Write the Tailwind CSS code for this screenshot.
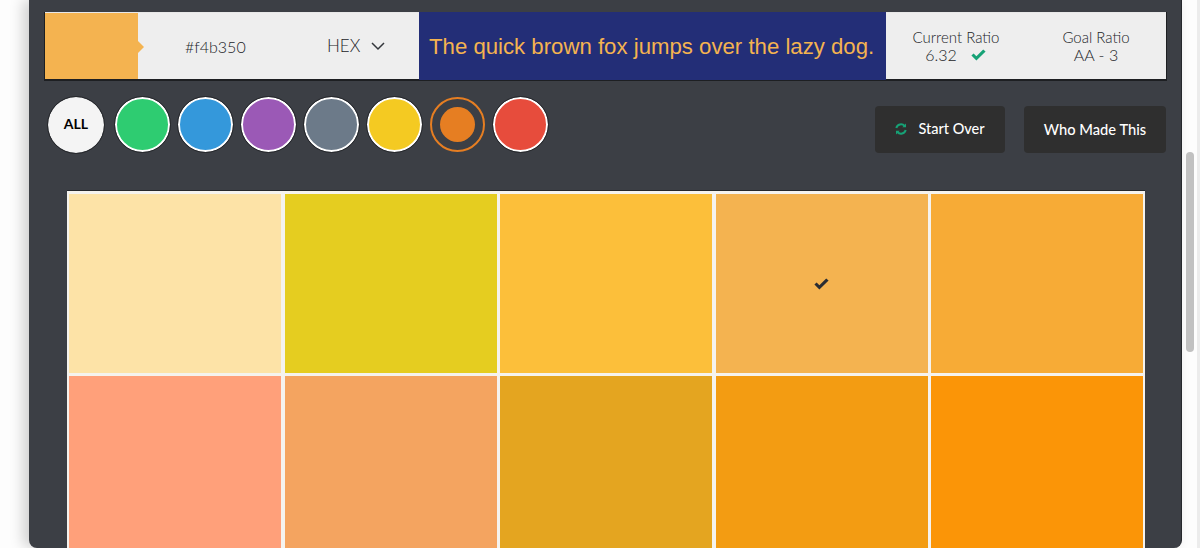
<!doctype html>
<html>
<head>
<meta charset="utf-8">
<script src="https://cdn.jsdelivr.net/npm/@tailwindcss/browser@4"></script>
</head>
<body class="bg-[#fdfdfd] overflow-hidden font-['Lato','sans-serif']">
<div class="w-[1200px] h-[548px] flex overflow-hidden">
  <main class="ml-[29px] w-[1153px] h-[548px] shrink-0 bg-[#3c3f45] rounded-b-lg shadow-[-6px_0_14px_rgba(0,0,0,0.18)] border-r border-[#26282c] pt-3 pl-4 pr-[15px] overflow-hidden">
    <section class="flex h-[69px] border-t border-[#e8e8e8] border-b-2 border-b-[#1d1f22] bg-[#eeeeee] shadow-[1px_0_0_#1d1f22,-1px_0_0_#1d1f22]">
      <div class="relative w-[93px] bg-[#f4b350] shrink-0">
        <div class="absolute left-full top-[28px] w-0 h-0 border-y-[6px] border-y-transparent border-l-[6px] border-l-[#f4b350]"></div>
      </div>
      <div class="flex items-center w-[281px] shrink-0 text-[#222428]">
        <span class="ml-[47px] w-[142px] text-[16px] font-light pt-[2px]">#f4b350</span>
        <span class="text-[17px] font-light">HEX</span>
        <svg class="ml-[11px] mt-[1px]" width="14" height="9" viewBox="0 0 14 9" fill="none" stroke="#33363b" stroke-width="1.5"><path d="M1 1l6 6 6-6"/></svg>
      </div>
      <div class="w-[467px] shrink-0 -mt-px -mb-px bg-[#232e77] flex items-center pl-[10px] pt-[1px] text-[#f4b350] text-[22.2px] font-['Liberation_Sans','sans-serif'] whitespace-nowrap">The quick brown fox jumps over the lazy dog.</div>
      <div class="flex-1 flex text-[#222428] font-light text-center">
        <div class="w-[140px] pt-[15px] leading-[18px]">
          <div class="text-[15px]">Current Ratio</div>
          <div class="text-[16px] flex items-center justify-center gap-[14px] pr-[1px]">6.32
            <svg width="15" height="12" viewBox="0 0 15 12" fill="#16a276"><path d="M5.4 11.6 0.4 6.6 2.6 4.4 5.4 7.2 12.2 0.4 14.6 2.6z"/></svg>
          </div>
        </div>
        <div class="w-[140px] pt-[15px] leading-[18px]">
          <div class="text-[15px]">Goal Ratio</div>
          <div class="text-[16px]">AA - 3</div>
        </div>
      </div>
    </section>
    <section class="flex justify-between mt-[14px]">
      <div class="flex gap-[8px] pl-[3px] pt-[1.5px]">
        <div class="w-[56px] h-[56px] mr-[3px] rounded-full bg-[#f4f4f4] outline outline-[#26282c] flex items-center justify-center text-[14px] font-bold text-black pb-[2px]">ALL</div>
        <div class="w-[55px] h-[55px] rounded-full bg-[#2ecc71] border-2 border-white outline outline-[#26282c]"></div>
        <div class="w-[55px] h-[55px] rounded-full bg-[#3498db] border-2 border-white outline outline-[#26282c]"></div>
        <div class="w-[55px] h-[55px] rounded-full bg-[#9b59b6] border-2 border-white outline outline-[#26282c]"></div>
        <div class="w-[55px] h-[55px] rounded-full bg-[#6c7a89] border-2 border-white outline outline-[#26282c]"></div>
        <div class="w-[55px] h-[55px] rounded-full bg-[#f4ca22] border-2 border-white outline outline-[#26282c]"></div>
        <div class="w-[55px] h-[55px] rounded-full border-2 border-[#e67e22] bg-[#3c3f45] flex items-center justify-center"><div class="w-[35px] h-[35px] rounded-full bg-[#e67e22]"></div></div>
        <div class="w-[55px] h-[55px] rounded-full bg-[#e74c3c] border-2 border-white outline outline-[#26282c]"></div>
      </div>
      <div class="flex gap-[19px] pt-[11px]">
        <button class="w-[130px] h-[46.5px] rounded bg-[#2f2f2f] text-white text-[14.5px] font-medium flex items-center justify-center gap-[11px]">
          <svg width="12" height="12" viewBox="0 0 12 12" fill="none" stroke="#16a276" stroke-width="2"><path d="M1.3 5A4.8 4.8 0 0 1 9.6 3"/><path d="M10.7 7A4.8 4.8 0 0 1 2.4 9"/><path d="M11 0.5v3.7H7.3z" fill="#16a276" stroke="none"/><path d="M1 11.5V7.8h3.7z" fill="#16a276" stroke="none"/></svg>
          Start Over
        </button>
        <button class="w-[142px] h-[46.5px] rounded bg-[#2f2f2f] text-white text-[14.7px] font-medium">Who Made This</button>
      </div>
    </section>
    <section class="mt-[37.5px] ml-[22px] mr-[21px] grid grid-cols-5 gap-x-[3.5px] gap-y-[3px] bg-[#f5f3ee] p-[2px] pt-[3px] border-t border-[#26282c] h-[400px] grid-rows-[179px_179px]">
      <div class="bg-[#fde3a7]"></div>
      <div class="bg-[#e5cd20]"></div>
      <div class="bg-[#fcbf3a]"></div>
      <div class="bg-[#f4b350] flex items-center justify-center">
        <svg width="15" height="12" viewBox="0 0 15 12" fill="#2a2d33"><path d="M5.4 11.6 0.4 6.6 2.6 4.4 5.4 7.2 12.2 0.4 14.6 2.6z"/></svg>
      </div>
      <div class="bg-[#f7ab36]"></div>
      <div class="bg-[#ffa07a]"></div>
      <div class="bg-[#f4a460]"></div>
      <div class="bg-[#e4a520]"></div>
      <div class="bg-[#f39c12]"></div>
      <div class="bg-[#fb9507]"></div>
    </section>
  </main>
  <aside class="w-[18px] shrink-0 pt-[152px] pl-[4px] border-r-[3px] border-[#ececec]">
    <div class="w-[8px] h-[200px] rounded-full bg-[#c1c1c1]"></div>
  </aside>
</div>
</body>
</html>
